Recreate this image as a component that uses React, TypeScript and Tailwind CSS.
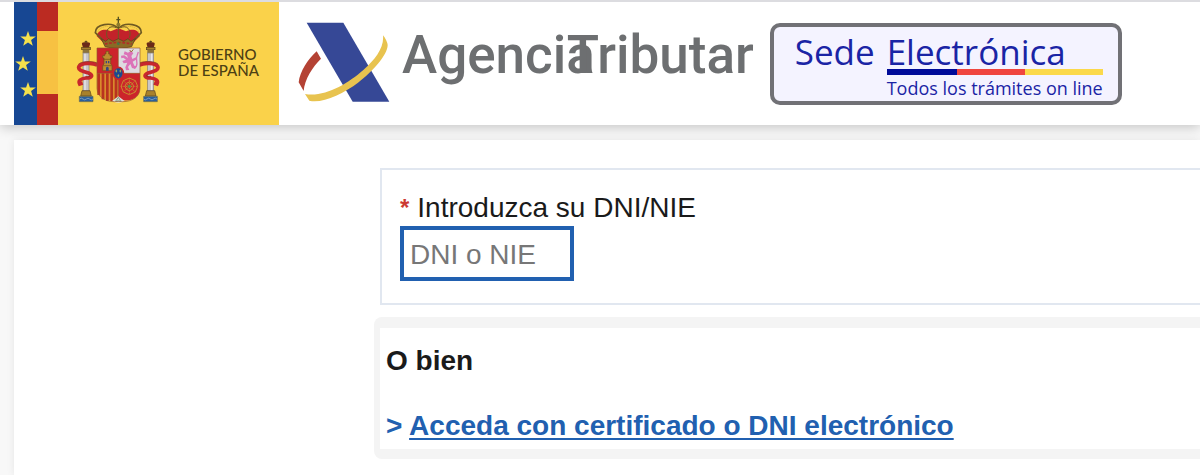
import { useState } from 'react';

const stars = [
  { x: 14, y: 37 },
  { x: 9, y: 62 },
  { x: 14, y: 88 },
];

const STAR = 'M0 -8 L1.9 -2.5 L7.8 -2.4 L3.1 1.1 L4.8 6.7 L0 3.4 L-4.8 6.7 L-3.1 1.1 L-7.8 -2.4 L-1.9 -2.5 Z';

function Flags() {
  return (
    <svg viewBox="0 0 44 123" className="h-[123px] w-11 shrink-0" aria-hidden="true">
      <rect width="23" height="123" fill="#174793" />
      <rect x="23" width="21" height="123" fill="#bb2b22" />
      <rect x="23" y="29" width="21" height="63" fill="#f7c142" />
      {stars.map((s) => (
        <path key={s.y} d={STAR} fill="#f5e04c" transform={`translate(${s.x} ${s.y})`} />
      ))}
    </svg>
  );
}

function Pillar() {
  return (
    <g>
      <path d="M36 103 Q34 95 48 97 Q62 95 60 103 L57 113 H39 Z" fill="#6b2a18" />
      <path d="M48 92 V99 M44 95 H52" stroke="#57401c" strokeWidth="3" />
      <rect x="35" y="112" width="26" height="7" fill="#a8812c" stroke="#57401c" strokeWidth="2" />
      <rect x="38" y="119" width="20" height="10" fill="#8d7338" />
      <rect x="39" y="129" width="18" height="114" fill="#c9c6c8" stroke="#857f7a" strokeWidth="2" />
      <path d="M45 131 V241" stroke="#e9e8ec" strokeWidth="4" />
      <path d="M36 242 H60 L64 258 H32 Z" fill="#a8812c" stroke="#57401c" strokeWidth="2" />
      <path d="M28 259 H69 V275 H28 Z" fill="#2b5f9c" stroke="#6b6a4a" strokeWidth="2" />
      <path d="M29 267 q5 -5 10 0 t10 0 t10 0 t10 0" stroke="#9db7c9" strokeWidth="2" fill="none" />
      {/* cinta */}
      <path d="M82 165 C64 156 34 160 27 169 C22 180 36 184 56 189 C72 196 64 205 48 204 C31 206 24 212 29 222 L38 219" fill="none" stroke="#c8272d" strokeWidth="11" />
      <path d="M82 159 C62 151 34 154 25 163 M56 194 C65 198 59 202 47 200" fill="none" stroke="#7d2a1f" strokeWidth="2" />
    </g>
  );
}

function CoatOfArms() {
  return (
    <svg viewBox="18 12 252 270" className="h-[90px] w-[84px] shrink-0" role="img" aria-label="Escudo de España">
      <Pillar />
      <g transform="translate(290 0) scale(-1 1)">
        <Pillar />
      </g>

      {/* corona */}
      <path d="M105 103 L80 78 C84 56 112 56 122 64 L145 55 L168 64 C183 56 206 56 210 78 L185 103 Z" fill="#c3222a" />
      <path d="M106 98 L76 68 C76 42 124 34 145 55 C166 34 214 42 214 68 L184 98" fill="none" stroke="#6f5a22" strokeWidth="5" />
      <path d="M84 67 C84 49 126 42 145 58 C164 42 206 49 206 67" fill="none" stroke="#d9ad3a" strokeWidth="3" strokeDasharray="3 3" />
      <path d="M112 84 C103 58 121 44 139 53 M178 84 C187 58 169 44 151 53 M145 52 V88" fill="none" stroke="#6f5a22" strokeWidth="3" />
      <path d="M145 20 V53 M139 29 H151" stroke="#57511f" strokeWidth="4" />
      <circle cx="145" cy="44" r="6" fill="#8d7a2c" />
      <path d="M94 86 L107 94 L116 86 L129 94 L145 86 L161 94 L174 86 L183 94 L196 86 L185 110 C160 116 130 116 105 110 Z" fill="#8b6a25" stroke="#57401c" strokeWidth="2" />
      <path d="M105 102 C130 96 160 96 185 102" stroke="#b32a27" strokeWidth="5" strokeDasharray="8 5" fill="none" />
      <circle cx="145" cy="101" r="4" fill="#3e7b4c" />

      {/* cuarteles */}
      <path d="M81 114 H145 V190 H81 Z" fill="#cc242b" />
      <path d="M145 114 H210 V190 H145 Z" fill="#dedbe1" />
      <path d="M81 190 H145 V268 C116 278 81 266 81 235 Z" fill="#d98a2c" />
      <path d="M86 190 V255 M99 190 V268 M112 190 V273 M125 190 V273 M138 190 V270" stroke="#b9331f" strokeWidth="8" />
      <path d="M145 190 H210 V235 C210 266 176 279 145 268 Z" fill="#cc242b" />
      <path d="M98 182 V166 L102 162 V144 H98 V137 H104 V132 H108 V124 H116 V132 H120 V137 H126 V144 H122 V162 L126 166 V182 Z" fill="#bd8c30" stroke="#704b1c" strokeWidth="2" />
      <path d="M100 148 H124 M99 167 H125" stroke="#704b1c" strokeWidth="2" />
      <path d="M108 182 V173 Q112 167 116 173 V182 Z M107 153 h4 v7 h-4 Z M114 153 h4 v7 h-4 Z" fill="#37457e" />
      <path d="M164 124 L174 128 L183 122 L190 130 L184 138 L187 147 L198 142 L198 149 L188 155 L193 167 L201 169 L195 176 L186 174 L181 162 L174 171 L178 180 L168 181 L166 172 L172 158 L161 160 L157 153 L168 149 L160 143 L154 145 L153 137 L163 136 L174 144 L171 136 L161 133 Z" fill="#dc72b8" />
      <path d="M193 175 C210 164 194 152 201 137 L205 126" fill="none" stroke="#dc72b8" strokeWidth="4" />
      <path d="M179 120 L184 126 L190 118" fill="none" stroke="#9b6d31" strokeWidth="3" />
      <g fill="none" stroke="#c98a2e" strokeWidth="3">
        <path d="M178 204 L196 212 L203 229 L196 246 L178 254 L160 246 L153 229 L160 212 Z" />
        <path d="M178 216 L187 220 L191 229 L187 238 L178 242 L169 238 L165 229 L169 220 Z" />
        <path d="M178 204 V254 M153 229 H203 M160 212 L196 246 M196 212 L160 246" strokeDasharray="3 2" />
      </g>
      <circle cx="178" cy="229" r="5" fill="#5a9344" />
      <path d="M126 273 L145 259 L164 273 Q145 283 126 273 Z" fill="#e2ddd7" />
      <path d="M145 262 L139 271 M145 262 L151 271 M136 273 H154" stroke="#3d8a5c" strokeWidth="2" />
      <path d="M81 114 H210 V235 C210 266 176 279 145 274 C116 279 81 266 81 235 Z M145 114 V255 M81 190 H210" fill="none" stroke="#94562d" strokeWidth="2" />
      <ellipse cx="145" cy="190" rx="15" ry="18" fill="#1c4a91" stroke="#c8272d" strokeWidth="5" />
      <g fill="#a3a352">
        <path d="M139 178 l3 5 l-3 5 l-3 -5 Z M151 178 l3 5 l-3 5 l-3 -5 Z M145 192 l3 5 l-3 5 l-3 -5 Z" />
      </g>
    </svg>
  );
}

function AgenciaMark() {
  return (
    <svg viewBox="24 36 276 240" className="h-20 w-[92px] shrink-0" aria-hidden="true">
      <path d="M50 38 H160 L298 275 H188 Z" fill="#364896" />
      <path d="M80 124 L93 146 C68 170 44 208 41 243 L26 217 C30 184 53 149 80 124 Z" fill="#b44234" />
      <path d="M279 76 C285 83 293 97 293 106 C292 136 248 185 204 218 C158 252 98 281 58 272 L45 252 C105 262 172 222 220 180 C256 148 283 113 279 76 Z" fill="#e8c34f" />
    </svg>
  );
}

function SedeBadge() {
  return (
    <a
      href="#sede"
      className="flex h-[82px] w-[352px] shrink-0 gap-3 rounded-[10px] border-4 border-[#717176] bg-[#f4f3ff] pl-[21px] font-['Open_Sans',sans-serif] text-[#1a24a5]"
    >
      <span className="text-[35px] leading-[50px]">Sede</span>
      <span className="w-[216px]">
        <span className="block h-[42px] text-[35px] leading-[50px]">Electrónica</span>
        <span className="flex h-1.5">
          <span className="w-[70px] bg-[#000b99]" />
          <span className="w-[68px] bg-[#f0463f]" />
          <span className="flex-1 bg-[#fbd94b]" />
        </span>
        <span className="block text-[18px] leading-[26px] font-medium whitespace-nowrap">Todos los trámites on line</span>
      </span>
    </a>
  );
}

export default function App() {
  const [dni, setDni] = useState('');

  return (
    <div className="flex min-h-screen flex-col overflow-hidden bg-[#f8f8f8] font-['Liberation_Sans',Arial,sans-serif] text-[28px] leading-8 text-[#1a1a1a]">
      <header className="relative flex items-start border-t-2 border-[#dcdce0] bg-white pl-3.5 shadow-[0_2px_12px_rgba(0,0,0,0.22)]">
        <div className="flex h-[123px] w-[265px] shrink-0 items-start bg-[#fad24a]">
          <Flags />
          <div className="flex pt-3 pl-[18px]">
            <CoatOfArms />
          </div>
          <p className="pt-11 pl-[18px] font-[Lato,sans-serif] text-[15px] leading-4 font-medium whitespace-nowrap text-[#4d4014]">
            GOBIERNO
            <br />
            DE ESPAÑA
          </p>
        </div>
        <a href="#inicio" className="flex shrink-0 pt-5 pl-[19px]">
          <AgenciaMark />
          <span className="flex pl-3 font-[Roboto,sans-serif] text-[53px] leading-[66px] font-medium text-[#6d6f71]">
            <span>Agencia</span>
            <span className="-ml-7">Tributar</span>
          </span>
        </a>
        <div className="pt-[21px] pl-4">
          <SedeBadge />
        </div>
      </header>

      <main className="mt-[15px] ml-3.5 flex-1 bg-white pt-7 pl-[360px] shadow-[0_0_8px_rgba(0,0,0,0.08)]">
        <form className="ml-1.5 border-y-2 border-l-2 border-[#e1e7f0] pt-[22px] pb-[22px] pl-[18px]">
          <label htmlFor="dni" className="flex h-[34px] gap-2">
            <span className="text-2xl leading-8 font-bold text-[#cc3a32]">*</span>
            <span>Introduzca su DNI/NIE</span>
          </label>
          <input
            id="dni"
            type="text"
            placeholder="DNI o NIE"
            value={dni}
            onChange={(e) => setDni(e.target.value)}
            className="block h-[55px] w-[174px] border-4 border-[#2160b0] bg-white px-1.5 pt-0.5 outline-none placeholder:text-[#777]"
          />
        </form>

        <section className="mt-3 rounded-l-lg border-t-[11px] border-b-[10px] border-l-[6px] border-[#f4f4f4] px-1.5 pt-[17px] pb-[7px] font-bold">
          <h2>O bien</h2>
          <p className="mt-[33px] text-[#2160b0]">
            &gt;{' '}
            <a href="#certificado" className="underline decoration-2 underline-offset-3">
              Acceda con certificado o DNI electrónico
            </a>
          </p>
        </section>
      </main>
    </div>
  );
}
